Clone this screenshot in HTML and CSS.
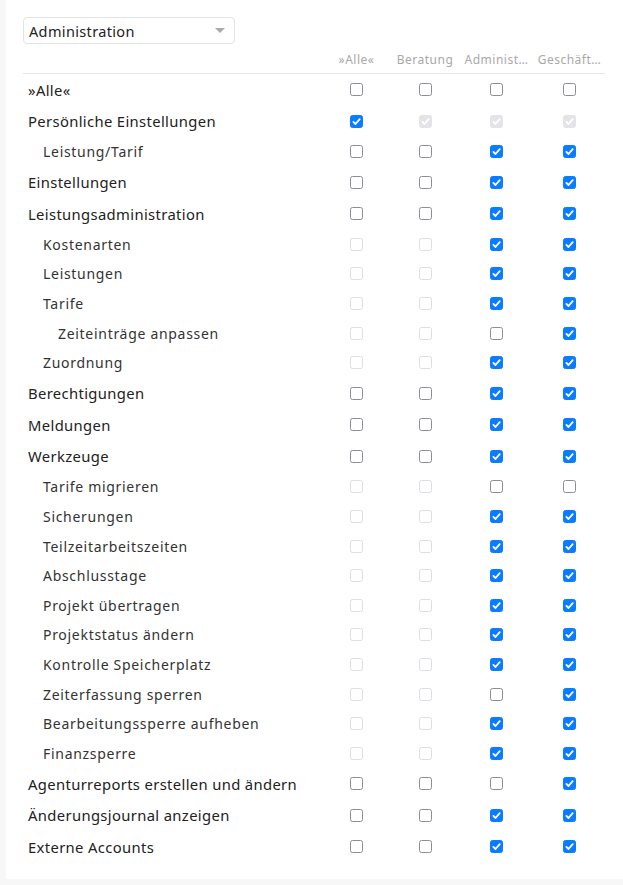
FILE: index.html
```html
<!DOCTYPE html>
<html lang="de">
<head>
    <meta charset="utf-8">
    <title>Berechtigungen</title>
    <link rel="stylesheet" href="styles.css">
</head>
<body>
    <div class="card">
        <div class="select-box">
            <span class="select-value">Administration</span>
            <span class="select-arrow"></span>
        </div>

        <div class="perm-head">
            <div></div>
            <div class="head-cell">»Alle«</div>
            <div class="head-cell">Beratung</div>
            <div class="head-cell">Administ…</div>
            <div class="head-cell">Geschäft…</div>
        </div>
        <div id="rows" class="perm-body"></div>
    </div>

    <script src="app.js"></script>
</body>
</html>
```

FILE: styles.css
```css
html {
    background: #f7f7f7;
}
body {
    margin: 0;
    font-family: "Noto Sans", "Open Sans", sans-serif;
    color: #222;
}
.card {
    background: #fff;
    margin-left: 6px;
    padding: 17px 18px 16px 17px;
    width: 582px;
}
.select-box {
    width: 212px;
    height: 27px;
    box-sizing: border-box;
    border: 1px solid #e3e3e3;
    border-radius: 4px;
    display: flex;
    align-items: center;
    justify-content: space-between;
    padding: 0 9px 0 5px;
}
.select-value {
    font-size: 14.5px;
    letter-spacing: 0.35px;
    color: #222;
}
.select-arrow {
    width: 0;
    height: 0;
    border-left: 5px solid transparent;
    border-right: 5px solid transparent;
    border-top: 5px solid #aaa;
}
.perm-head,
.perm-row {
    display: grid;
    grid-template-columns: 300px 67px 70px 73px 73px;
    align-items: center;
}
.perm-head {
    margin-top: 3px;
    height: 26px;
    border-bottom: 1px solid #e6e6e6;
}
.head-cell {
    font-size: 12px;
    letter-spacing: 0.5px;
    color: #a8a8a8;
    text-align: center;
    white-space: nowrap;
    overflow: hidden;
    padding-bottom: 2px;
}
.perm-row {
    height: 31.5px;
}
.perm-row.sub {
    height: 29.6px;
}
.name {
    padding-left: 5px;
    font-size: 14.8px;
    letter-spacing: 0.35px;
    color: #222;
}
.sub .name {
    padding-left: 20px;
    font-size: 14px;
    letter-spacing: 0.7px;
    color: #333;
}
.sub2 .name {
    padding-left: 35px;
}
.cell {
    display: flex;
    justify-content: center;
}
.cb {
    width: 13px;
    height: 13px;
    box-sizing: border-box;
    border: 1px solid #8e8c98;
    border-radius: 2.5px;
}
.cb svg {
    display: block;
    width: 13px;
    height: 13px;
    margin: -1px;
}
.cb.on {
    background: #0a7cff;
    border-color: #0a7cff;
}
.cb.off-disabled {
    border-color: #dedde2;
}
.cb.on-disabled {
    background: #e4e3e8;
    border-color: #e4e3e8;
}
```

FILE: app.js
```js
// state: 0 = empty, 1 = checked, 2 = disabled empty, 3 = disabled checked
var rows = [
    ['»Alle«', 0, [0, 0, 0, 0]],
    ['Persönliche Einstellungen', 0, [1, 3, 3, 3]],
    ['Leistung/Tarif', 1, [0, 0, 1, 1]],
    ['Einstellungen', 0, [0, 0, 1, 1]],
    ['Leistungsadministration', 0, [0, 0, 1, 1]],
    ['Kostenarten', 1, [2, 2, 1, 1]],
    ['Leistungen', 1, [2, 2, 1, 1]],
    ['Tarife', 1, [2, 2, 1, 1]],
    ['Zeiteinträge anpassen', 2, [2, 2, 0, 1]],
    ['Zuordnung', 1, [2, 2, 1, 1]],
    ['Berechtigungen', 0, [0, 0, 1, 1]],
    ['Meldungen', 0, [0, 0, 1, 1]],
    ['Werkzeuge', 0, [0, 0, 1, 1]],
    ['Tarife migrieren', 1, [2, 2, 0, 0]],
    ['Sicherungen', 1, [2, 2, 1, 1]],
    ['Teilzeitarbeitszeiten', 1, [2, 2, 1, 1]],
    ['Abschlusstage', 1, [2, 2, 1, 1]],
    ['Projekt übertragen', 1, [2, 2, 1, 1]],
    ['Projektstatus ändern', 1, [2, 2, 1, 1]],
    ['Kontrolle Speicherplatz', 1, [2, 2, 1, 1]],
    ['Zeiterfassung sperren', 1, [2, 2, 0, 1]],
    ['Bearbeitungssperre aufheben', 1, [2, 2, 1, 1]],
    ['Finanzsperre', 1, [2, 2, 1, 1]],
    ['Agenturreports erstellen und ändern', 0, [0, 0, 0, 1]],
    ['Änderungsjournal anzeigen', 0, [0, 0, 1, 1]],
    ['Externe Accounts', 0, [0, 0, 1, 1]]
];

var classes = ['', 'on', 'off-disabled', 'on-disabled'];
var check = '<svg viewBox="0 0 13 13"><path d="M3.4 6.9 L5.5 9 L9.7 4.2" fill="none" stroke="#fff" stroke-width="1.8" stroke-linecap="round" stroke-linejoin="round"/></svg>';

var body = document.getElementById('rows');
rows.forEach(function (r) {
    var row = document.createElement('div');
    row.className = 'perm-row';
    if (r[1] > 0) row.className += ' sub';
    if (r[1] > 1) row.className += ' sub2';
    var html = '<div class="name">' + r[0] + '</div>';
    r[2].forEach(function (s) {
        var inner = (s === 1 || s === 3) ? check : '';
        html += '<div class="cell"><div class="cb ' + classes[s] + '">' + inner + '</div></div>';
    });
    row.innerHTML = html;
    body.appendChild(row);
});
```
